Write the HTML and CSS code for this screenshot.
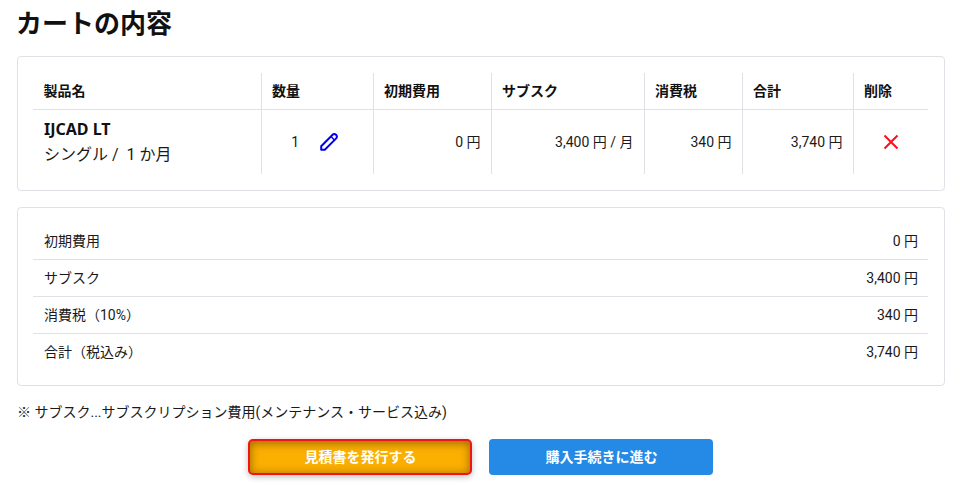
FILE: index.html
```html
<!DOCTYPE html>
<html lang="ja">
<head>
<meta charset="utf-8">
<title>カートの内容</title>
<link rel="stylesheet" href="styles.css">
</head>
<body>
<h1 class="title">カートの内容</h1>
<section class="card cart">
  <table class="items">
    <colgroup>
      <col class="c1"><col class="c2"><col class="c3"><col class="c4"><col class="c5"><col class="c6"><col class="c7">
    </colgroup>
    <thead>
      <tr><th>製品名</th><th>数量</th><th>初期費用</th><th>サブスク</th><th>消費税</th><th>合計</th><th>削除</th></tr>
    </thead>
    <tbody>
      <tr>
        <td class="product"><div class="pname">IJCAD LT</div><div class="pplan">シングル /  1 か月</div></td>
        <td class="qty"><span class="qtyn">1</span>
          <svg class="pencil" width="20" height="20" viewBox="0 0 20 20" fill="none" stroke="#0000f0" stroke-width="2" stroke-linejoin="round"><path d="M2.2 17.8v-3.6L13.6 2.8a2.4 2.4 0 0 1 3.4 0l0.2 0.2a2.4 2.4 0 0 1 0 3.4L5.8 17.8z"/><path d="M12 4.6l3.4 3.4" stroke-width="1.4"/></svg>
        </td>
        <td class="num">0 円</td>
        <td class="num">3,400 円 / 月</td>
        <td class="num">340 円</td>
        <td class="num">3,740 円</td>
        <td class="del"><svg width="16" height="16" viewBox="0 0 16 16" stroke="#fa0f1e" stroke-width="2" fill="none"><path d="M1.5 1.5l13 13M14.5 1.5l-13 13"/></svg></td>
      </tr>
    </tbody>
  </table>
</section>
<section class="card summary">
  <div class="row"><span>初期費用</span><span>0 円</span></div>
  <div class="row"><span>サブスク</span><span>3,400 円</span></div>
  <div class="row"><span>消費税（10%）</span><span>340 円</span></div>
  <div class="row"><span>合計（税込み）</span><span>3,740 円</span></div>
</section>
<p class="note">※ サブスク...サブスクリプション費用(メンテナンス・サービス込み)</p>
<div class="actions">
  <button class="btn quote">見積書を発行する</button>
  <button class="btn buy">購入手続きに進む</button>
</div>
</body>
</html>
```
FILE: styles.css
```css
* { box-sizing: border-box; }
html, body { margin: 0; padding: 0; background: #fff; }
body {
  width: 967px;
  height: 489px;
  overflow: hidden;
  padding: 0 22px 0 17px;
  font-family: Roboto, "Noto Sans CJK JP", sans-serif;
  font-size: 14px;
  color: #1a1a1a;
}
.title {
  margin: 0 0 0 -1px;
  height: 56px;
  padding-top: 3px;
  font-family: "Noto Sans CJK JP", sans-serif;
  font-size: 26px;
  line-height: 38px;
  font-weight: 700;
  color: #111;
}
.card {
  border: 1px solid #e0e0e6;
  border-radius: 4px;
  background: #fff;
}
.cart { height: 135px; padding: 16px 16px 0 15px; }
.items { width: 895px; border-collapse: collapse; table-layout: fixed; }
.c1 { width: 228px; } .c2 { width: 112px; } .c3 { width: 118px; } .c4 { width: 153px; }
.c5 { width: 98px; } .c6 { width: 111px; } .c7 { width: 75px; }
.items th, .items td { padding: 0 10px; border-left: 1px solid #e0e0e6; }
.items th:first-child, .items td:first-child { border-left: 0; }
.items th {
  height: 36px;
  padding: 0 10px 1px 10.5px;
  text-align: left;
  font-size: 14px;
  font-weight: 700;
  color: #111;
  border-bottom: 1px solid #e0e0e6;
}
.items td { height: 65px; }
.items .product { padding: 7px 10px 0 11px; }
.pname { font-family: "Noto Sans", "Noto Sans CJK JP", sans-serif; font-weight: 700; font-size: 16px; line-height: 20px; color: #111; }
.pplan { font-size: 16px; line-height: 32px; white-space: pre; }
.qty { text-align: right; white-space: nowrap; }
.qtyn { margin-right: 16px; font-size: 14px; vertical-align: -2px; }
.pencil { vertical-align: middle; margin-right: 24px; }
.items .num { padding-bottom: 1px; text-align: right; white-space: nowrap; }
.del { text-align: center; }
.del svg { display: block; margin: 0 auto; }
.summary { height: 179px; margin-top: 16px; padding: 15px 16px 16px 15px; }
.row {
  display: flex;
  justify-content: space-between;
  align-items: center;
  height: 37px;
  padding: 0 10px 3px 11px;
  border-top: 1px solid #e0e0e6;
}
.row:first-child { border-top: 0; height: 36px; }
.note { margin: 16px 0 0; line-height: 20px; }
.actions { display: flex; justify-content: center; gap: 17px; margin-top: 17px; padding-right: 2px; }
.btn {
  width: 224px;
  height: 36px;
  padding: 0 0 2px 2px;
  border: 0;
  border-radius: 4px;
  font-family: inherit;
  font-size: 14px;
  font-weight: 700;
  color: #fff;
}
.quote {
  background: #fbaf00;
  border: 2px solid #f01414;
  border-radius: 5px;
  box-shadow: inset 0 3px 8px rgba(110, 70, 0, .45), inset 0 0 8px rgba(110, 70, 0, .35), 0 2px 6px rgba(0, 0, 0, .25);
}
.buy { background: #2589e6; }
```
